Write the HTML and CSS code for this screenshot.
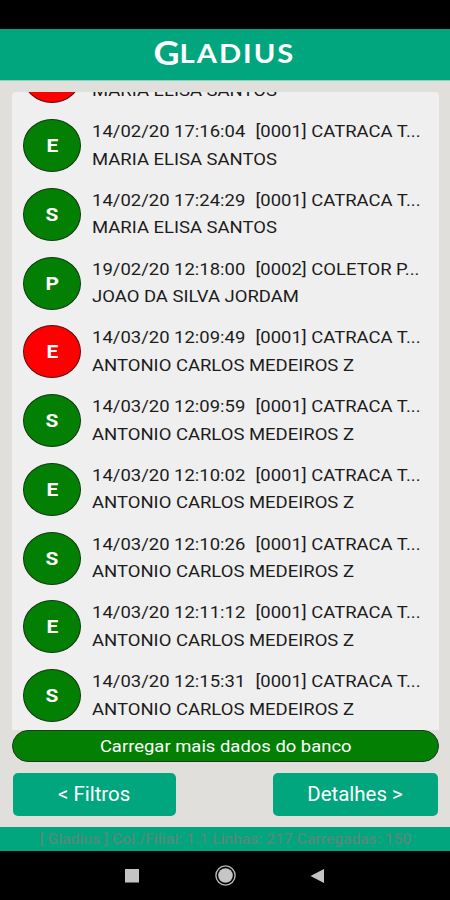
FILE: index.html
```html
<!DOCTYPE html>
<html lang="pt-BR">
<head>
    <meta charset="UTF-8">
    <meta name="viewport" content="width=device-width, initial-scale=1.0">
    <title>Gladius</title>
    <link rel="stylesheet" href="styles.css">
</head>
<body>
    <div class="screen">
        <div class="status-bar"></div>

        <header class="header">
            <h1 class="logo"><span class="logo-g">G</span><span class="logo-rest">LADIUS</span></h1>
        </header>

        <main class="content">
            <div class="list">
                <div class="row">
                    <div class="badge red"></div>
                    <div class="info">
                        <p>&nbsp;</p>
                        <p>MARIA ELISA SANTOS</p>
                    </div>
                </div>
                <div class="row">
                    <div class="badge"><span>E</span></div>
                    <div class="info">
                        <p><span class="date">14/02/20 17:16:04</span><span>[0001] CATRACA T...</span></p>
                        <p>MARIA ELISA SANTOS</p>
                    </div>
                </div>
                <div class="row">
                    <div class="badge"><span>S</span></div>
                    <div class="info">
                        <p><span class="date">14/02/20 17:24:29</span><span>[0001] CATRACA T...</span></p>
                        <p>MARIA ELISA SANTOS</p>
                    </div>
                </div>
                <div class="row">
                    <div class="badge"><span>P</span></div>
                    <div class="info">
                        <p><span class="date">19/02/20 12:18:00</span><span>[0002] COLETOR P...</span></p>
                        <p>JOAO DA SILVA JORDAM</p>
                    </div>
                </div>
                <div class="row">
                    <div class="badge red"><span>E</span></div>
                    <div class="info">
                        <p><span class="date">14/03/20 12:09:49</span><span>[0001] CATRACA T...</span></p>
                        <p>ANTONIO CARLOS MEDEIROS Z</p>
                    </div>
                </div>
                <div class="row">
                    <div class="badge"><span>S</span></div>
                    <div class="info">
                        <p><span class="date">14/03/20 12:09:59</span><span>[0001] CATRACA T...</span></p>
                        <p>ANTONIO CARLOS MEDEIROS Z</p>
                    </div>
                </div>
                <div class="row">
                    <div class="badge"><span>E</span></div>
                    <div class="info">
                        <p><span class="date">14/03/20 12:10:02</span><span>[0001] CATRACA T...</span></p>
                        <p>ANTONIO CARLOS MEDEIROS Z</p>
                    </div>
                </div>
                <div class="row">
                    <div class="badge"><span>S</span></div>
                    <div class="info">
                        <p><span class="date">14/03/20 12:10:26</span><span>[0001] CATRACA T...</span></p>
                        <p>ANTONIO CARLOS MEDEIROS Z</p>
                    </div>
                </div>
                <div class="row">
                    <div class="badge"><span>E</span></div>
                    <div class="info">
                        <p><span class="date">14/03/20 12:11:12</span><span>[0001] CATRACA T...</span></p>
                        <p>ANTONIO CARLOS MEDEIROS Z</p>
                    </div>
                </div>
                <div class="row">
                    <div class="badge"><span>S</span></div>
                    <div class="info">
                        <p><span class="date">14/03/20 12:15:31</span><span>[0001] CATRACA T...</span></p>
                        <p>ANTONIO CARLOS MEDEIROS Z</p>
                    </div>
                </div>
            </div>

            <button class="load-more"><span>Carregar mais dados do banco</span></button>

            <div class="actions">
                <button class="btn btn-filter"><span>&lt; Filtros</span></button>
                <button class="btn btn-details"><span>Detalhes &gt;</span></button>
            </div>
        </main>

        <footer class="footer"><span>[ Gladius ] Col./Filial: 1.1 Linhas: 217 Carregadas: 150</span></footer>

        <nav class="nav-bar">
            <svg width="24" height="24" viewBox="0 0 24 24"><rect x="5" y="5" width="14" height="13.5" fill="#c4c4c4"/></svg>
            <svg width="24" height="24" viewBox="0 0 24 24">
                <circle cx="12.5" cy="11.5" r="9.6" fill="none" stroke="#b8b8b8" stroke-width="1.4"/>
                <circle cx="12.5" cy="11.5" r="7.3" fill="#c6c6c6"/>
            </svg>
            <svg width="24" height="24" viewBox="0 0 24 24"><path d="M4.5 12 18 5v14z" fill="#c4c4c4"/></svg>
        </nav>
    </div>
</body>
</html>
```

FILE: styles.css
```css
* {
    margin: 0;
    padding: 0;
    box-sizing: border-box;
}

body {
    font-family: Roboto, "Liberation Sans", sans-serif;
    background: #000;
    color: #1c1c1c;
    height: 100vh;
    overflow: hidden;
}

.screen {
    width: 450px;
    height: 900px;
    display: flex;
    flex-direction: column;
}

.status-bar {
    height: 29px;
}

.header {
    height: 51px;
    background: #02a67e;
    display: flex;
    justify-content: center;
    align-items: center;
    padding: 0 3px 4px 0;
}

.logo {
    display: flex;
    align-items: center;
    font-family: Lato, sans-serif;
    font-weight: 700;
    color: #fff;
    line-height: 1;
    transform: scaleX(1.12);
}

.logo-g {
    font-size: 32px;
}

.logo-rest {
    font-size: 26px;
    letter-spacing: 1.8px;
    margin-right: -1.8px;
}

.content {
    height: 747px;
    padding: 11px 11px 0 12px;
    background: #e0dfdb;
    border-top: 1px solid #8fd3bf;
}

.list {
    height: 638px;
    background: #efefef;
    border-radius: 4px 4px 0 0;
    overflow: hidden;
    display: flex;
    flex-direction: column;
    justify-content: flex-end;
}

.row {
    height: 68.75px;
    flex-shrink: 0;
    display: flex;
    align-items: center;
    padding-left: 11px;
    gap: 11px;
}

.badge {
    width: 58px;
    height: 53px;
    border: 1px solid #123812;
    border-radius: 50%;
    background: #038003;
    color: #fff;
    display: flex;
    justify-content: center;
    align-items: center;
    font-size: 19px;
    font-weight: 700;
}

.badge.red {
    background: #fe0000;
    border-color: #5a1010;
}

.badge span {
    transform: scaleX(1.1);
}

.info p {
    font-size: 17.4px;
    line-height: 27.5px;
    white-space: nowrap;
    transform: scaleX(1.062);
    transform-origin: left;
}

.date {
    margin-right: 9.5px;
}

button {
    border: none;
    color: #fff;
    font-family: inherit;
    cursor: pointer;
}

button span,
.footer span {
    display: inline-block;
    transform: scaleX(1.06);
}

.load-more {
    display: block;
    width: 427px;
    height: 32px;
    background: #038003;
    border: 1px solid #1c3a1c;
    border-radius: 16px;
    font-size: 17.4px;
}

.actions {
    display: flex;
    justify-content: space-between;
    margin-top: 11px;
    padding: 0 1px;
}

.btn {
    height: 43px;
    background: #02a67e;
    border-radius: 5px;
    font-size: 19.3px;
}

.btn-filter {
    width: 163px;
}

.btn-details {
    width: 165px;
}

.footer {
    height: 24px;
    background: #02a67e;
    color: #528a7c;
    text-align: center;
    font-size: 14.7px;
    font-weight: 500;
    line-height: 24px;
    white-space: nowrap;
}

.nav-bar {
    height: 49px;
    display: flex;
    justify-content: center;
    align-items: center;
    gap: 69px;
}
```
